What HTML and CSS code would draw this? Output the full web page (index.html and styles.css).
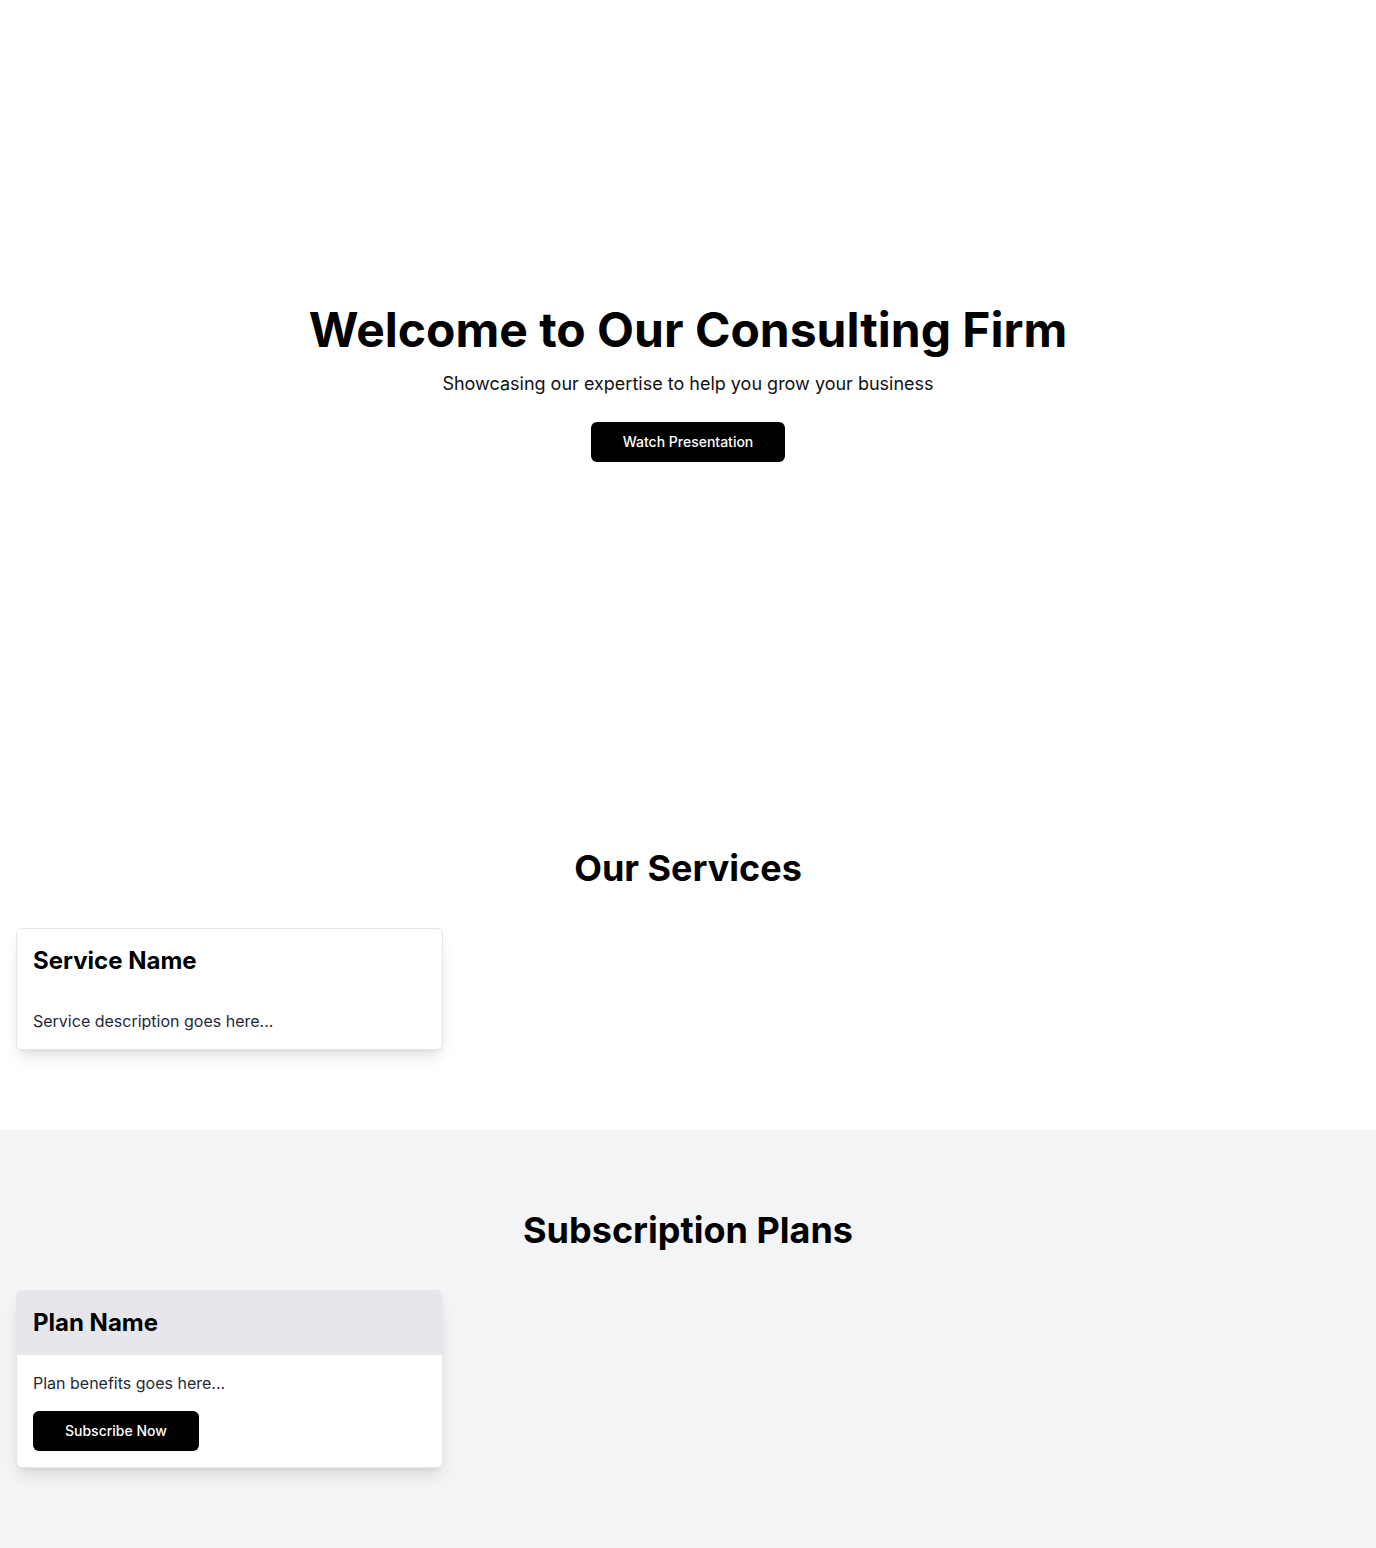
FILE: index.html
```html
<!DOCTYPE html>
<html lang="en">
<head>
<meta charset="utf-8">
<title>Consulting Firm</title>
<link rel="stylesheet" href="styles.css">
</head>
<body>
<main>
  <section class="hero">
    <div class="hero-inner">
      <h1 class="hero-title">Welcome to Our Consulting Firm</h1>
      <p class="hero-sub">Showcasing our expertise to help you grow your business</p>
      <button class="btn">Watch Presentation</button>
    </div>
  </section>
  <section class="section">
    <h2 class="section-title">Our Services</h2>
    <div class="grid">
      <div class="card">
        <div class="card-header"><h3 class="card-title">Service Name</h3></div>
        <div class="card-content"><p class="card-text">Service description goes here...</p></div>
      </div>
    </div>
  </section>
  <section class="section section-gray">
    <h2 class="section-title">Subscription Plans</h2>
    <div class="grid">
      <div class="card plan">
        <div class="card-header plan-header"><h3 class="card-title">Plan Name</h3></div>
        <div class="card-content">
          <p class="card-text">Plan benefits goes here...</p>
          <button class="btn btn-plan">Subscribe Now</button>
        </div>
      </div>
    </div>
  </section>
</main>
</body>
</html>
```
FILE: styles.css
```css
* { box-sizing: border-box; margin: 0; padding: 0; }
body {
  font-family: Inter, "Noto Sans", sans-serif;
  color: #000;
  background: #fff;
}
.hero {
  height: 768px;
  display: flex;
  align-items: center;
  justify-content: center;
  text-align: center;
}
.hero-inner {
  display: flex;
  flex-direction: column;
  align-items: center;
}
.hero-title {
  font-size: 48px;
  line-height: 48px;
  font-weight: 700;
}
.hero-sub {
  margin-top: 16px;
  font-size: 18px;
  line-height: 28px;
  color: #111;
}
.btn {
  margin-top: 24px;
  height: 40px;
  padding: 0 32px;
  background: #000;
  color: #fff;
  border: none;
  border-radius: 6px;
  font-family: Inter, "Noto Sans", sans-serif;
  font-size: 14px;
  line-height: 20px;
  font-weight: 500;
  padding-bottom: 1px;
}
.section {
  padding: 80px 16px;
}
.section-gray { background: #f3f4f6; }
.section-title {
  text-align: center;
  font-size: 36px;
  line-height: 40px;
  font-weight: 700;
  margin-bottom: 40px;
}
.grid {
  display: grid;
  grid-template-columns: repeat(3, 1fr);
  gap: 32px;
}
.card {
  background: #fff;
  border: 1px solid #e5e7eb;
  border-radius: 6px;
  box-shadow: 0 10px 15px -3px rgba(0,0,0,0.1), 0 4px 6px -4px rgba(0,0,0,0.1);
  overflow: hidden;
}
.card-header { padding: 16px; }
.plan-header { background: #e5e7eb; }
.card-title {
  font-size: 24px;
  line-height: 32px;
  font-weight: 700;
}
.card-content { padding: 16px; }
.card-text {
  font-size: 16px;
  line-height: 24px;
  color: #1f2937;
}
.btn-plan { margin-top: 16px; display: block; }
```
